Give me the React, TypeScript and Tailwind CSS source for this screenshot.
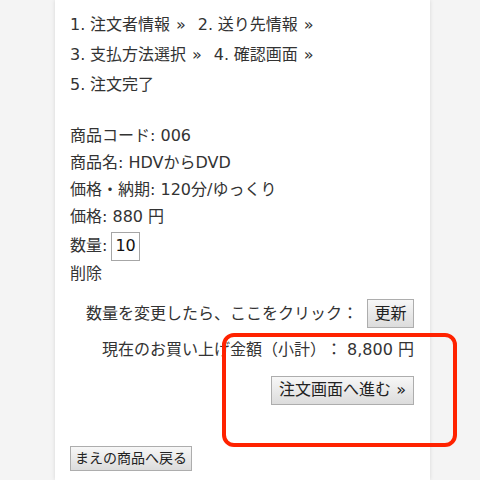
const font = { fontFamily: '"DejaVu Sans", "Noto Sans CJK JP", sans-serif' };

const steps = [
    [
        { n: "1.", label: "注文者情報", arrow: true },
        { n: "2.", label: "送り先情報", arrow: true },
    ],
    [
        { n: "3.", label: "支払方法選択", arrow: true },
        { n: "4.", label: "確認画面", arrow: true },
    ],
    [{ n: "5.", label: "注文完了", arrow: false }],
];

const Btn = ({ children, className = "" }: { children: React.ReactNode; className?: string }) => (
    <button
        className={`flex items-center justify-center border border-[#adadad] bg-gradient-to-b from-[#f7f7f7] to-[#dcdcdc] text-[#222] leading-none ${className}`}
    >
        {children}
    </button>
);

export default function App() {
    return (
        <div
            className="relative h-[480px] w-[480px] overflow-hidden bg-[#f4f4f4] text-[#333] [text-spacing-trim:space-all]"
            style={font}
        >
            <div className="ml-[55px] h-full w-[375px] bg-white px-[15px] pt-[10px] shadow-[0_0_4px_rgba(0,0,0,0.12)]">
                <div className="text-[16px] leading-[30px]">
                    {steps.map((row, i) => (
                        <div key={i} className="flex">
                            {row.map((s) => (
                                <span key={s.n} className="mr-[12px] flex">
                                    <span className="w-[20px]">{s.n}</span>
                                    <span>{s.label}</span>
                                    {s.arrow && <span className="ml-[6px]">»</span>}
                                </span>
                            ))}
                        </div>
                    ))}
                </div>

                <div className="mt-[22.5px] text-[16px]">
                    <div className="flex h-[27px] items-center">商品コード: 006</div>
                    <div className="flex h-[27px] items-center">商品名: HDVからDVD</div>
                    <div className="flex h-[27px] items-center">価格・納期: 120分/ゆっくり</div>
                    <div className="flex h-[27px] items-center">価格: 880 円</div>
                    <div className="flex h-[31px] items-center">
                        数量:
                        <span className="ml-[4px] flex h-[29px] w-[29px] items-center border border-[#a6a6a6] pl-[3px] text-[#111]">
                            10
                        </span>
                    </div>
                    <div className="flex h-[25px] items-center">削除</div>
                </div>

                <div className="mt-[12.5px] flex items-center justify-end pr-[1px] text-[16px]">
                    <span>数量を変更したら、ここをクリック：</span>
                    <Btn className="ml-[9px] h-[29px] w-[47px] text-[16px]">更新</Btn>
                </div>

                <div className="mt-[8px] flex h-[27px] items-center justify-end pr-[1px] text-[16px]">
                    現在のお買い上げ金額（小計）： 8,800 円
                </div>

                <div className="mt-[12.5px] flex justify-end pr-[1px]">
                    <Btn className="h-[29px] w-[143px] text-[16px]">注文画面へ進む »</Btn>
                </div>

                <div className="mt-[41px]">
                    <Btn className="h-[25px] w-[122px] text-[14px]">まえの商品へ戻る</Btn>
                </div>
            </div>

            <div className="absolute left-[222px] top-[333px] h-[114px] w-[235px] rounded-[12px] border-[4px] border-[#ff2200]" />
        </div>
    );
}
